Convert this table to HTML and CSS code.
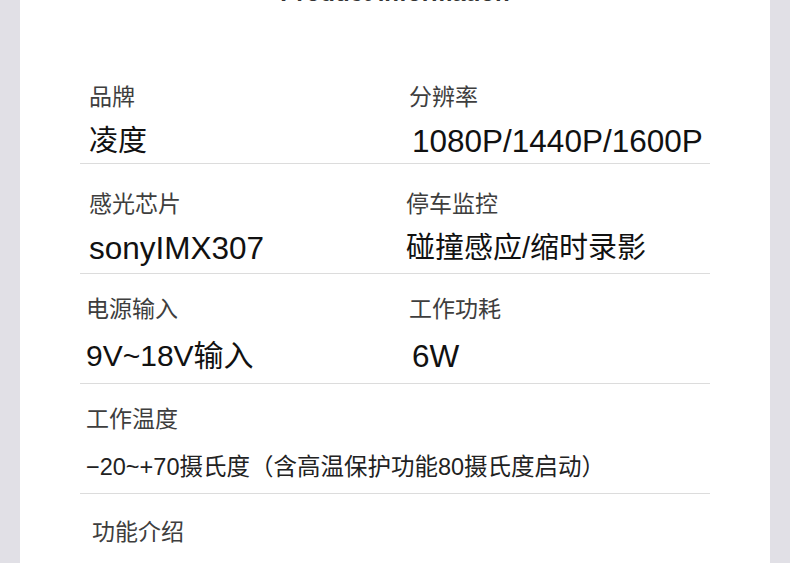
FILE: index.html
```html
<!DOCTYPE html>
<html lang="zh-CN">
<head>
<meta charset="utf-8">
<title>Product information</title>
<link rel="stylesheet" href="styles.css">
</head>
<body>
<main class="panel">
  <h2 class="title">Product information</h2>
  <section class="specs">
    <div class="row row-1">
      <div class="cell cell-a">
        <div class="label">品牌</div>
        <div class="value">凌度</div>
      </div>
      <div class="cell cell-b">
        <div class="label">分辨率</div>
        <div class="value value-latin nudge">1080P/1440P/1600P</div>
      </div>
    </div>
    <div class="row row-2">
      <div class="cell cell-a">
        <div class="label">感光芯片</div>
        <div class="value value-latin">sonyIMX307</div>
      </div>
      <div class="cell cell-b shift-l">
        <div class="label">停车监控</div>
        <div class="value">碰撞感应/缩时录影</div>
      </div>
    </div>
    <div class="row row-3">
      <div class="cell cell-a shift-l">
        <div class="label">电源输入</div>
        <div class="value value-mixed">9V~18V输入</div>
      </div>
      <div class="cell cell-b">
        <div class="label">工作功耗</div>
        <div class="value value-latin nudge">6W</div>
      </div>
    </div>
    <div class="row row-4 row-full">
      <div class="cell cell-a shift-l">
        <div class="label">工作温度</div>
        <div class="value value-small">−20~+70摄氏度（含高温保护功能80摄氏度启动）</div>
      </div>
    </div>
    <div class="row row-5 row-last">
      <div class="cell cell-a shift-r">
        <div class="label">功能介绍</div>
      </div>
    </div>
  </section>
</main>
</body>
</html>
```

FILE: styles.css
```css
html, body {
  margin: 0;
  padding: 0;
}
body {
  background: #e1e0e6;
  font-family: "Liberation Sans", "Noto Sans CJK SC", sans-serif;
  height: 563px;
  overflow: hidden;
}
.panel {
  margin: 0 20px;
  background: #ffffff;
  height: 563px;
  overflow: hidden;
}
.title {
  margin: -19px 0 0;
  text-align: center;
  font-size: 24px;
  line-height: 24px;
  font-weight: bold;
  color: #333;
}
.specs {
  padding: 0 60px;
  margin-top: 49px;
}
.row {
  display: grid;
  grid-template-columns: 320px 310px;
  height: 109px;
  border-bottom: 1px solid #dcdcdc;
}
.row-full {
  grid-template-columns: 1fr;
}
.row-last {
  border-bottom: none;
}
.cell {
  padding-top: 29px;
}
.row-2 .cell {
  padding-top: 26px;
}
.row-3 .cell,
.row-4 .cell {
  padding-top: 21px;
}
.row-5 .cell {
  padding-top: 24px;
}
.cell-a {
  padding-left: 9px;
}
.cell-b {
  padding-left: 9px;
}
.cell-a.shift-l {
  padding-left: 6px;
}
.cell-a.shift-r {
  padding-left: 12px;
}
.cell-b.shift-l {
  padding-left: 6px;
}
.label {
  font-family: "Noto Sans CJK SC", sans-serif;
  font-size: 23px;
  line-height: 24px;
  color: #3e3e3e;
}
.value {
  margin-top: 16px;
  font-size: 29px;
  line-height: 36px;
  color: #111;
}
.row-3 .value {
  margin-top: 19px;
}
.nudge {
  padding-left: 3px;
}
.value-latin {
  font-size: 31.5px;
}
.value-mixed {
  font-size: 30px;
}
.value-small {
  font-size: 23.5px;
  color: #222;
}
.row-4 .value-small {
  margin-top: 20px;
}
```
